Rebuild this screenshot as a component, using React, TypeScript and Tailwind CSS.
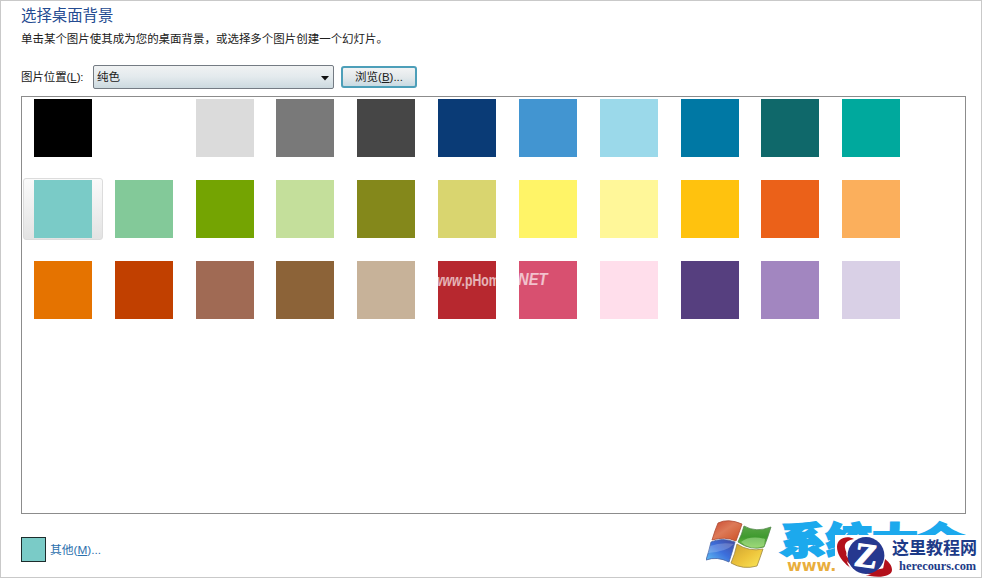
import { useState } from "react";

const COLORS = [
  "#000000", "#ffffff", "#dbdbdb", "#797979", "#464646", "#0a3b76", "#4295d1", "#9bd9ea", "#0078a4", "#0f686a", "#00a99d",
  "#7acbc7", "#83c999", "#74a402", "#c4df9b", "#84881b", "#d9d56f", "#fff467", "#fff799", "#ffc20e", "#eb6119", "#fbaf5c",
  "#e57300", "#c14000", "#a06a54", "#8c6338", "#c7b299", "#b7282f", "#d85070", "#ffdeeb", "#563f7f", "#a286c0", "#d9d0e6",
];

const WindowsFlag = () => (
  <svg width="68" height="50" viewBox="0 0 68 50">
    <defs>
      <linearGradient id="red" x1="0" y1="0" x2="1" y2="1">
        <stop offset="0" stopColor="#c9472f" />
        <stop offset=".45" stopColor="#dd7a58" />
        <stop offset="1" stopColor="#cc4f22" />
      </linearGradient>
      <linearGradient id="green" x1="0" y1="0" x2="0" y2="1">
        <stop offset="0" stopColor="#5aa647" />
        <stop offset=".5" stopColor="#3f9a2f" />
        <stop offset="1" stopColor="#7cc847" />
      </linearGradient>
      <linearGradient id="blue" x1="1" y1="0" x2="0" y2="1">
        <stop offset="0" stopColor="#44489c" />
        <stop offset=".5" stopColor="#3c6fdc" />
        <stop offset="1" stopColor="#62c4f6" />
      </linearGradient>
      <linearGradient id="yellow" x1="0" y1="0" x2="1" y2="1">
        <stop offset="0" stopColor="#c9a030" />
        <stop offset=".5" stopColor="#ecc23a" />
        <stop offset="1" stopColor="#fbe95a" />
      </linearGradient>
    </defs>
    <path d="M12 3Q22-2 36 4Q33 13 30 21Q19 16 6 20Q9 10 12 3Z" fill="url(#red)" stroke="#ad4b35" strokeWidth=".8" />
    <path d="M38 6Q50 13 65 7Q62 17 58 27Q45 31 32 22Q36 14 38 6Z" fill="url(#green)" stroke="#53864b" strokeWidth=".8" />
    <path d="M5 22Q16 17 29 22Q26 33 23 42Q11 36 0 40Q3 31 5 22Z" fill="url(#blue)" stroke="#4562a3" strokeWidth=".8" />
    <path d="M31 24Q43 32 57 29Q54 38 51 46Q37 50 25 43Q29 34 31 24Z" fill="url(#yellow)" stroke="#9d8741" strokeWidth=".8" />
    <path d="M35 22Q44 15 59 19L58 26Q45 31 35 22Z" fill="#c4efb0" opacity=".45" />
    <path d="M4 26Q15 22 28 24Q20 32 2 33Z" fill="#fff" opacity=".2" />
  </svg>
);

const TutorialLogo = () => (
  <svg width="58" height="42" viewBox="0 0 58 42" className="shrink-0">
    <path d="M19 4C12 0 2 3 2 12C2 24 17 38 35 41C46 43 57 41 57 35C57 31 55 28 50 24L48 34C40 39 13 29 10 13C9 8 13 5 19 4Z" fill="#b3101b" />
    <circle cx="30.5" cy="21" r="19.3" fill="#fff" />
    <path d="M8 13C12 29 31 39 49 33L46 40C28 42 7 27 6 14Z" fill="#b3101b" />
    <circle cx="31" cy="20.5" r="18.4" fill="#26388f" />
    <text x="31" y="32" textAnchor="middle" fontFamily="Liberation Serif, serif" fontWeight="bold" fontSize="34" fill="#fff" stroke="#fff" strokeWidth="1" transform="rotate(8 31 21)">Z</text>
  </svg>
);

export default function App() {
  const [selected, setSelected] = useState(11);

  return (
    <div className="relative h-[578px] w-[982px] overflow-hidden border border-[#c9c9c9] bg-white pl-5 font-['Liberation_Sans','Noto_Sans_CJK_SC',sans-serif] text-[12px] text-[#202020]">
      <h1 className="pt-1 text-[15.4px] leading-[22px] text-[#244b91]">选择桌面背景</h1>
      <p className="mt-[3px] h-[18px] whitespace-nowrap text-[11.48px] leading-[18px]">
        单击某个图片使其成为您的桌面背景，或选择多个图片创建一个幻灯片。
      </p>

      <div className="mt-[17px] flex h-6 items-center">
        <label className="w-[72px] pt-0.5 text-[11.5px] tracking-[-0.1px]">
          图片位置(<u>L</u>):
        </label>
        <button className="flex h-6 w-[241px] items-center justify-between rounded-[2px] border border-[#747b83] bg-linear-to-b from-[#f0f2f3] via-[#e3eaed] to-[#ccd9df] pt-0.5 pr-1 pl-[3px] text-[11.5px]">
          纯色
          <svg width="8" height="5" viewBox="0 0 8 5">
            <path d="M0 0H8L4 4.5Z" fill="#111" />
          </svg>
        </button>
        <button className="ml-[7px] h-[22px] w-[76px] rounded-[3px] border-2 border-[#4d9fb9] bg-linear-to-b from-[#f2f3f4] via-[#e4e9eb] to-[#c8dae2] text-[11.5px] leading-[18px]">
          浏览(<u>B</u>)...
        </button>
      </div>

      <div className="mt-[7px] h-[418px] w-[945px] border border-[#8c8c8c] pl-px">
        <div className="grid w-[889px] grid-cols-11 gap-y-[19px]">
          {COLORS.map((color, i) => (
            <button
              key={i}
              onClick={() => setSelected(i)}
              className={`flex h-[62px] w-20 items-center justify-center rounded-[3px] border ${
                selected === i ? "border-[#dcdcdc] bg-linear-to-b from-[#fafafa] to-[#e3e3e3]" : "border-transparent"
              }`}
            >
              <span className="size-[58px]" style={{ backgroundColor: color }} />
            </button>
          ))}
        </div>
      </div>

      <div className="mt-[23px] flex items-center">
        <span className="size-[25px] border border-[#1d2c2c] bg-[#7acbc7]" />
        <a href="#" className="ml-1 text-[11.8px] leading-[18px] text-[#2b70ad]">
          其他(<u>M</u>)...
        </a>
      </div>

      {/* watermarks */}
      <div className="absolute top-[269px] left-[432px] origin-left scale-x-[0.72] text-[17px] leading-[22px] font-bold whitespace-nowrap text-white/65">
        <i>www</i>.pHome.
      </div>
      <div className="absolute top-[268px] left-[517px] origin-left scale-x-[0.92] text-[16px] leading-[22px] font-bold text-white/65 italic">NET</div>
      <div className="absolute top-[519px] left-[705px]">
        <WindowsFlag />
      </div>
      <div className="absolute top-[517px] left-[779px] origin-top scale-y-[0.8] text-[46px] leading-[50px] font-black whitespace-nowrap text-[#1ca9ed] [-webkit-text-stroke:2.5px_#1ca9ed] font-['Noto_Sans_CJK_SC',sans-serif]">
        系统大全
      </div>
      <div className="absolute top-[555px] left-[786px] text-[16px] leading-[20px] font-bold text-[#e9ae3d] font-['DejaVu_Sans',sans-serif]">www.</div>
      <div className="absolute top-[534px] left-[834px] flex h-[43px] w-[147px] bg-white">
        <TutorialLogo />
        <div className="whitespace-nowrap text-[#1d3b88] font-['Liberation_Serif','Noto_Sans_CJK_SC',serif]">
          <div className="mt-[3px] -ml-px text-[17px] leading-[21px] font-bold">这里教程网</div>
          <div className="ml-[6px] text-[12.4px] leading-[15px] font-bold">herecours.com</div>
        </div>
      </div>
    </div>
  );
}
